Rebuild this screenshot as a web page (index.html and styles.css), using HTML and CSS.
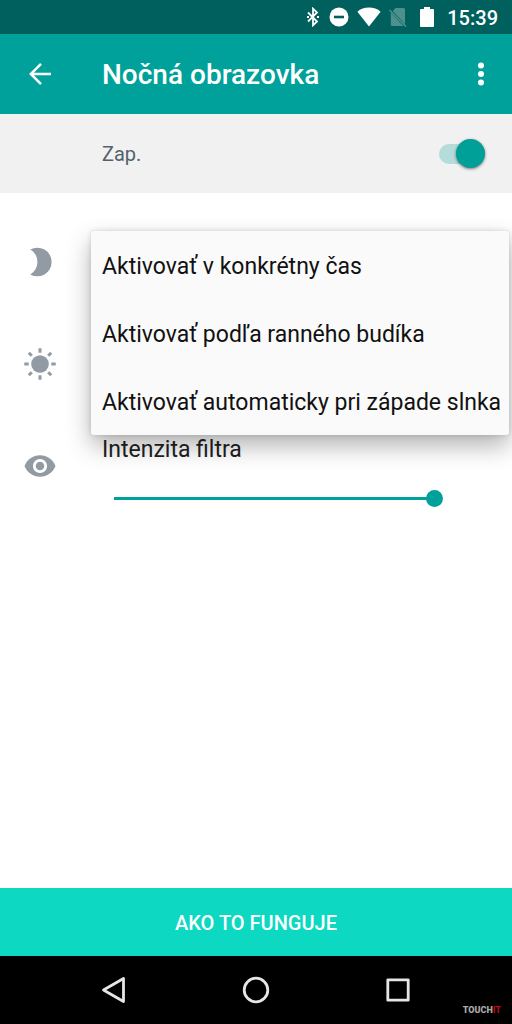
FILE: index.html
```html
<!DOCTYPE html>
<html lang="sk">
<head>
<meta charset="utf-8">
<meta name="viewport" content="width=device-width, initial-scale=1">
<title>Nočná obrazovka</title>
<link rel="stylesheet" href="styles.css">
</head>
<body>
<div class="screen">
  <div class="status-bar">
    <svg width="20" height="20" viewBox="0 0 20 20" fill="none" stroke="#fff" stroke-width="1.800" aria-hidden="true"><path d="M6 5.500l9 9-4 3.800V1.700l4 3.800-9 9"/><path d="M5 10h2M15 10h2" stroke-width="2"/></svg>
    <svg width="20" height="20" viewBox="0 0 20 20" aria-hidden="true"><circle cx="10" cy="10" r="9.5" fill="#fff"/><path d="M5 10h10" stroke="#00605d" stroke-width="2.6"/></svg>
    <svg width="25" height="20" viewBox="0 0 25 20" aria-hidden="true"><path d="M13 19.5L1.400 4.800C4.500 2 8.500.6 13 .6s8.500 1.400 11.600 4.200z" fill="#fff"/></svg>
    <svg width="20" height="20" viewBox="0 0 20 20" aria-hidden="true"><path d="M7.500 1H15.500q1.500 0 1.500 1.500v14.700L4.800 4zM2.800 5.500L15.500 19H4q-1.200 0-1.200-1.200z" fill="#4d908e"/><path d="M1.500 3l16.500 16.500" stroke="#4d908e" stroke-width="1.500"/></svg>
    <svg width="24" height="20" viewBox="0 0 24 20" aria-hidden="true"><path d="M9 0h6v2H18q1 0 1 1v16q0 1-1 1H6q-1 0-1-1V3q0-1 1-1h3z" fill="#fff"/></svg>
    <time class="clock">15:39</time>
  </div>

  <header class="app-bar">
    <button class="icon-button" aria-label="Späť">
      <svg width="24" height="24" viewBox="0 0 24 24" fill="none" stroke="#fff" stroke-width="2.500" aria-hidden="true"><path d="M23 12H3M13 1.800L2.800 12 13 22.200"/></svg>
    </button>
    <h1 class="title">Nočná obrazovka</h1>
    <button class="icon-button more" aria-label="Ďalšie možnosti">
      <svg width="8" height="24" viewBox="0 0 8 24" fill="#fff" aria-hidden="true"><circle cx="4" cy="3.500" r="3"/><circle cx="4" cy="12" r="3"/><circle cx="4" cy="20.500" r="3"/></svg>
    </button>
  </header>

  <label class="switch-row">
    <span>Zap.</span>
    <input class="switch" type="checkbox" role="switch" checked>
  </label>

  <main class="settings">
    <section class="setting">
      <svg class="setting-icon" width="32" height="32" viewBox="0 0 32 32" fill="#929ba3" aria-hidden="true"><path d="M6.200 3.600A14.300 14.300 0 1 1 6.200 28.400C15.800 23 15.800 9 6.200 3.600z"/></svg>
      <div class="menu" role="menu">
        <button class="menu-item" role="menuitem">Aktivovať v konkrétny čas</button>
        <button class="menu-item" role="menuitem">Aktivovať podľa ranného budíka</button>
        <button class="menu-item" role="menuitem">Aktivovať automaticky pri západe slnka</button>
      </div>
    </section>
    <section class="setting">
      <svg class="setting-icon" width="32" height="32" viewBox="0 0 32 32" fill="#929ba3" stroke="#929ba3" stroke-width="3" aria-hidden="true"><circle cx="16" cy="16" r="8.800" stroke="none"/><path d="M16 .3v4.400M16 27.300v4.400M.3 16h4.400M27.300 16h4.400M4.800 4.800l3 3M24.200 24.200l3 3M4.800 27.200l3-3M24.200 7.800l3-3"/></svg>
    </section>
    <section class="setting">
      <svg class="setting-icon" width="32" height="32" viewBox="0 0 32 32" aria-hidden="true"><path d="M.5 16C3 9.400 9 5.200 16 5.200S29 9.400 31.500 16C29 22.600 23 26.800 16 26.800S3 22.600.5 16z" fill="#929ba3"/><circle cx="16" cy="16" r="5.700" fill="#929ba3" stroke="#fff" stroke-width="2.800"/></svg>
      <div class="intensity">
        <label class="intensity-label" for="intensity">Intenzita filtra</label>
        <input class="slider" id="intensity" type="range" min="0" max="100" value="100">
      </div>
    </section>
  </main>

  <button class="how-button">AKO TO FUNGUJE</button>

  <nav class="nav-bar">
    <button class="nav-button" aria-label="Späť"><svg width="28" height="28" viewBox="0 0 28 28" fill="none" stroke="#e6e6e6" stroke-width="2.800" stroke-linejoin="round" aria-hidden="true"><path d="M23.500 2.500v23L3.500 14z"/></svg></button>
    <button class="nav-button" aria-label="Domov"><svg width="28" height="28" viewBox="0 0 28 28" fill="none" stroke="#e6e6e6" stroke-width="2.800" aria-hidden="true"><circle cx="14" cy="14" r="11.800"/></svg></button>
    <button class="nav-button" aria-label="Prehľad"><svg width="28" height="28" viewBox="0 0 28 28" fill="none" stroke="#e6e6e6" stroke-width="2.800" stroke-linejoin="round" aria-hidden="true"><path d="M3.800 3.800h20.400v20.400H3.800z"/></svg></button>
    <span class="watermark">TOUCH<span class="watermark-accent">IT</span></span>
  </nav>
</div>
</body>
</html>
```
FILE: styles.css
```css
* {
  box-sizing: border-box;
}

body {
  margin: 0;
  background: #fff;
  color: #212121;
  font-family: Roboto, "Noto Sans", sans-serif;
  font-size: 23px;
}

button {
  margin: 0;
  padding: 0;
  border: 0;
  background: none;
  color: inherit;
  font: inherit;
}

svg {
  display: block;
  flex: none;
}

.screen {
  display: flex;
  flex-direction: column;
  min-height: 100vh;
}

.status-bar {
  display: flex;
  align-items: center;
  justify-content: flex-end;
  gap: 7px;
  height: 34px;
  padding-right: 14px;
  background: #00605d;
  color: #fff;
}

.clock {
  padding-left: 1px;
  padding-top: 1px;
  font-size: 20px;
  font-weight: 500;
  line-height: 24px;
}

.app-bar {
  display: flex;
  align-items: center;
  height: 80px;
  padding: 0 19px 0 28px;
  background: #00a19a;
  color: #fff;
}

.icon-button {
  display: flex;
  justify-content: center;
}

.title {
  flex: 1;
  margin: 0;
  padding: 2px 0 0 50px;
  font-size: 28px;
  font-weight: 500;
  line-height: 32px;
}

.more {
  width: 24px;
}

.switch-row {
  display: flex;
  align-items: center;
  justify-content: space-between;
  height: 79px;
  padding: 0 27px 0 102px;
  background: #f1f1f1;
  color: #53616e;
  font-size: 20px;
  line-height: 24px;
}

.switch {
  display: flex;
  align-items: center;
  justify-content: flex-end;
  appearance: none;
  width: 46px;
  height: 20px;
  margin: 0;
  border-radius: 10px;
  background: #b3dcda;
}

.switch::before {
  content: "";
  flex: none;
  width: 29px;
  height: 29px;
  border-radius: 50%;
  background: #009f98;
  box-shadow: 0 1px 3px rgba(0, 0, 0, 0.5);
}

.settings {
  flex: 1;
  padding-top: 18px;
}

.setting {
  display: flex;
  align-items: center;
  position: relative;
  height: 102px;
  padding: 0 69px 0 24px;
}

.menu {
  position: absolute;
  z-index: 1;
  top: 20px;
  left: 91px;
  right: 3px;
  border-radius: 3px;
  background: #fafafa;
  box-shadow: 0 11px 24px rgba(0, 0, 0, 0.3), 0 0 5px rgba(0, 0, 0, 0.15);
}

.menu-item {
  display: block;
  width: 100%;
  height: 68px;
  padding: 2px 11px 0;
  color: #111;
  text-align: left;
  white-space: nowrap;
}

.intensity {
  display: flex;
  flex: 1;
  flex-direction: column;
  gap: 22px;
  padding: 10px 0 0 46px;
}

.intensity-label {
  line-height: 32px;
}

.slider {
  appearance: none;
  height: 20px;
  margin: 0 0 0 12px;
  background: linear-gradient(#00a19a, #00a19a) left center / calc(100% - 8px) 3px no-repeat;
}

.slider::-webkit-slider-thumb {
  appearance: none;
  width: 17px;
  height: 17px;
  border-radius: 50%;
  background: #00a19a;
}

.how-button {
  height: 68px;
  padding-top: 2px;
  background: #0dd8c2;
  color: #fff;
  font-size: 20px;
  font-weight: 500;
}

.nav-bar {
  display: flex;
  align-items: center;
  justify-content: space-between;
  position: relative;
  height: 68px;
  padding: 0 100px;
  background: #000;
}

.watermark {
  position: absolute;
  right: 11px;
  bottom: 8px;
  color: #aaa;
  font-size: 9px;
  font-weight: 900;
  line-height: 12px;
}

.watermark-accent {
  color: #b00c12;
}
```
